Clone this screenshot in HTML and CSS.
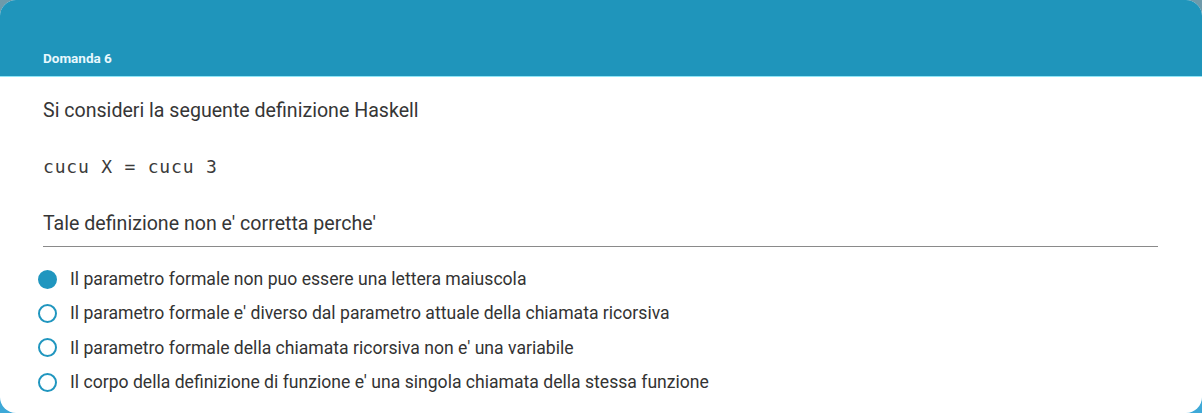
FILE: index.html
```html
<!DOCTYPE html>
<html lang="it">
<head>
<meta charset="utf-8">
<title>Domanda 6</title>
<link rel="stylesheet" href="styles.css">
</head>
<body>
<div class="card">
  <div class="card-header">
    <span class="q-title">Domanda 6</span>
  </div>
  <div class="card-body">
    <p class="prompt">Si consideri la seguente definizione Haskell</p>
    <pre class="code">cucu X = cucu 3</pre>
    <p class="prompt question">Tale definizione non e' corretta perche'</p>
    <ul class="options">
      <li class="option"><span class="radio checked"></span><span>Il parametro formale non puo essere una lettera maiuscola</span></li>
      <li class="option"><span class="radio"></span><span>Il parametro formale e' diverso dal parametro attuale della chiamata ricorsiva</span></li>
      <li class="option"><span class="radio"></span><span>Il parametro formale della chiamata ricorsiva non e' una variabile</span></li>
      <li class="option"><span class="radio"></span><span>Il corpo della definizione di funzione e' una singola chiamata della stessa funzione</span></li>
    </ul>
  </div>
</div>
</body>
</html>
```

FILE: styles.css
```css
html, body {
  margin: 0;
  padding: 0;
  height: 413px;
  overflow: hidden;
}
body {
  background: linear-gradient(to bottom, #6f9aaa 0%, #2e9ac2 50%, #3ea9d8 100%);
  font-family: Roboto, "Noto Sans", sans-serif;
}
.card {
  height: 413px;
  border-radius: 16px;
  overflow: hidden;
  background: #ffffff;
  display: flex;
  flex-direction: column;
}
.card-header {
  height: 77px;
  flex: none;
  background: #1f95bb;
  border-bottom: 1px solid #8fe6f7;
  box-sizing: border-box;
  padding: 48px 0 0 43px;
}
.q-title {
  color: #e8f8fd;
  font-size: 13.5px;
  font-weight: 700;
  line-height: 16px;
}
.card-body {
  padding: 22px 44px 0 43px;
  color: #363636;
}
.prompt {
  margin: 0;
  font-size: 19.6px;
  line-height: 24px;
}
.code {
  margin: 32px 0 0 0;
  font-family: "DejaVu Sans Mono", monospace;
  font-size: 18px;
  letter-spacing: 0.8px;
  line-height: 24px;
  color: #3b3b3b;
}
.question {
  margin-top: 33px;
  padding-bottom: 10px;
  border-bottom: 1px solid #8a8a8a;
}
.options {
  list-style: none;
  margin: 15px 0 0 -5px;
  padding: 0;
}
.option {
  display: flex;
  align-items: center;
  gap: 13px;
  height: 34.3px;
  font-size: 17.6px;
  color: #333;
}
.radio {
  width: 19px;
  height: 19px;
  box-sizing: border-box;
  border-radius: 50%;
  border: 2px solid #2096bf;
  flex: none;
}
.radio.checked {
  background: #2096bf;
}
```
